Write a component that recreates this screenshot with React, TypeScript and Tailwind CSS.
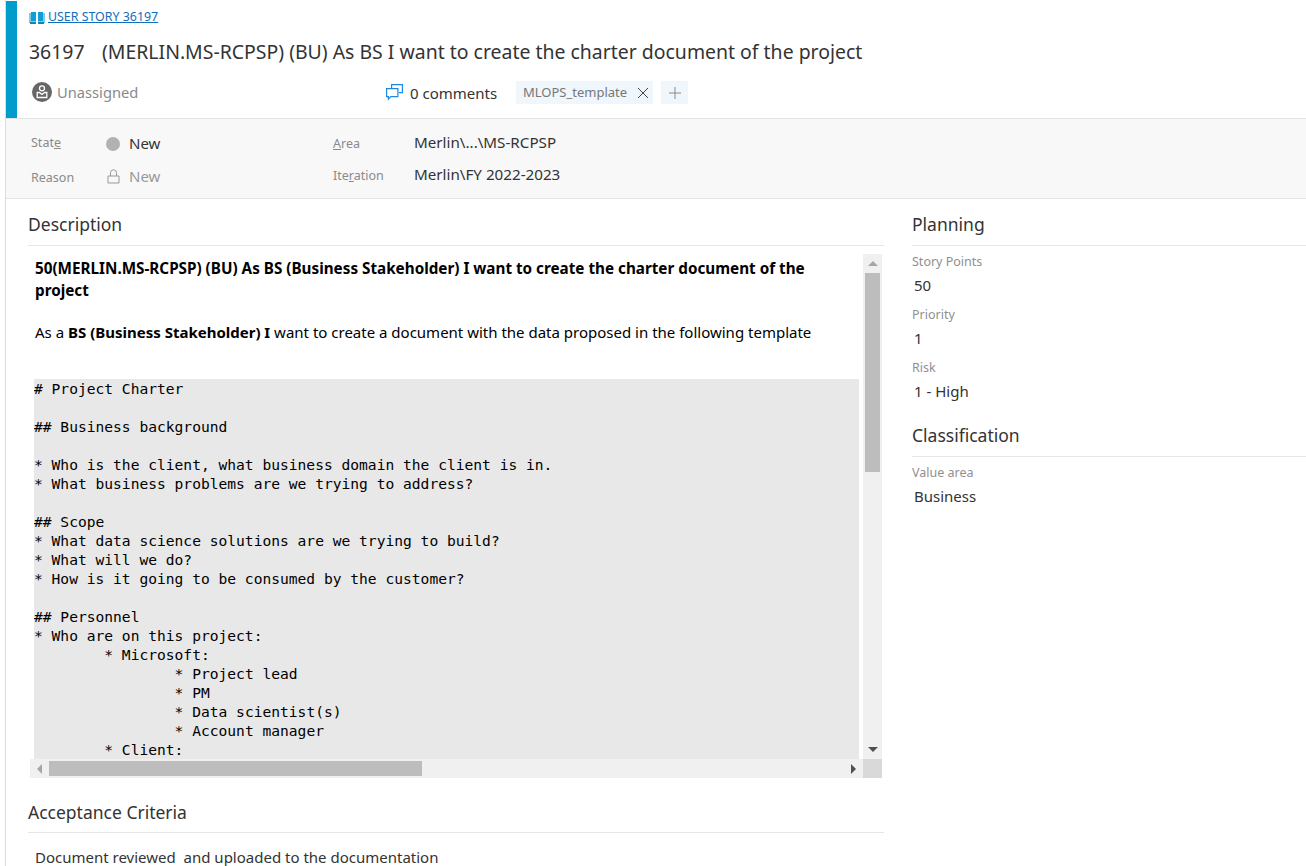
import React from 'react';

const ui = { fontFamily: '"Noto Sans", "Open Sans", sans-serif' };

const codeText = `# Project Charter

## Business background

* Who is the client, what business domain the client is in.
* What business problems are we trying to address?

## Scope
* What data science solutions are we trying to build?
* What will we do?
* How is it going to be consumed by the customer?

## Personnel
* Who are on this project:
\t* Microsoft:
\t\t* Project lead
\t\t* PM
\t\t* Data scientist(s)
\t\t* Account manager
\t* Client:`;

function BookIcon() {
  return (
    <svg width="16" height="12" viewBox="0 0 16 12" className="shrink-0">
      <path d="M0 1h16v10H0z" fill="#7fcbe6" />
      <path d="M2 0h5v9H2zM9 0h5v9H9z" fill="#0f9ed5" />
      <path d="M7 0h2v11H7z" fill="#ffffff" />
      <path d="M1 10h6v2H1zM9 10h6v2H9z" fill="#0f86b8" />
    </svg>
  );
}

function AvatarIcon() {
  return (
    <svg width="20" height="20" viewBox="0 0 20 20" className="shrink-0">
      <circle cx="10" cy="10" r="10" fill="#666666" />
      <circle cx="10" cy="6.3" r="2.5" fill="none" stroke="#ffffff" strokeWidth="1.3" />
      <path d="M5.2 10.5h2.2l2.6 2 2.6-2h2.2v5H5.2z" fill="none" stroke="#ffffff" strokeWidth="1.3" />
    </svg>
  );
}

function CommentIcon() {
  return (
    <svg width="17" height="17" viewBox="0 0 17 17" className="shrink-0" fill="none" stroke="#1e88e5" strokeWidth="1.2">
      <path d="M5.6 4.5V.6h10.8v8h-3.5" />
      <path d="M.6 4.6h11.3v8H4.8l-2.4 2.6v-2.6H.6z" fill="#ffffff" />
    </svg>
  );
}

function LockIcon() {
  return (
    <svg width="13" height="15" viewBox="0 0 13 15" fill="none" stroke="#999999" strokeWidth="1">
      <path d="M1 7h11v7H1z" />
      <path d="M3.5 7V3.8a3 3 0 0 1 6 0V7" />
    </svg>
  );
}

function Field({ label, value }: { label: string; value: string }) {
  return (
    <div className="h-[53px]">
      <div className="pt-[1px] text-[12.5px] leading-[16px] text-[#8f8f8f]">{label}</div>
      <div className="pl-[2px] pt-[5px] text-[15px] leading-[20px] text-[#333333]">{value}</div>
    </div>
  );
}

export default function App() {
  return (
    <div className="h-[866px] w-[1306px] overflow-hidden bg-white" style={ui}>
      <div className="ml-[5px] h-full border-l border-[#dcdcdc]">
        {/* Header */}
        <div className="flex h-[119px] border-b border-[#e4e4e4] pt-[1px]">
          <div className="w-[11px] shrink-0 bg-[#009ccc]" />
          <div className="flex-1 pl-[12px]">
            <div className="flex h-[30px] items-center gap-[3px] pt-[3px]">
              <BookIcon />
              <a className="text-[12.4px] text-[#106ebe] underline">USER STORY 36197</a>
            </div>
            <div className="flex h-[41px] items-center text-[19.45px] text-[#333333]">
              <span className="w-[73px]">36197</span>
              <span className="whitespace-nowrap">(MERLIN.MS-RCPSP) (BU) As BS I want to create the charter document of the project</span>
            </div>
            <div className="flex h-[41px] items-center pl-[3px]">
              <div className="flex w-[354px] items-center gap-[5px]">
                <AvatarIcon />
                <span className="text-[14.7px] text-[#8a8a8a]">Unassigned</span>
              </div>
              <CommentIcon />
              <span className="ml-[7px] w-[106px] pt-[2px] text-[15px] text-[#333333]">0 comments</span>
              <div className="flex h-[23px] w-[137px] items-center justify-between bg-[#eff6fc] pl-[7px] pr-[4px]">
                <span className="text-[13px] text-[#777777]">MLOPS_template</span>
                <svg width="12" height="12" viewBox="0 0 12 12" stroke="#444444" strokeWidth="1">
                  <path d="M1 1l10 10M11 1L1 11" />
                </svg>
              </div>
              <div className="ml-[8px] flex h-[23px] w-[27px] items-center justify-center bg-[#eff6fc]">
                <svg width="14" height="14" viewBox="0 0 14 14" stroke="#8a8a8a" strokeWidth="1">
                  <path d="M7 1v12M1 7h12" />
                </svg>
              </div>
            </div>
          </div>
        </div>

        {/* State bar */}
        <div className="flex h-[80px] border-b border-[#e4e4e4] bg-[#f8f8f8] pl-[25px] pt-[8px]">
          <div className="w-[302px]">
            <div className="flex h-[33px] items-center">
              <span className="w-[75px] text-[12.5px] text-[#8a8a8a]">Stat<span className="underline">e</span></span>
              <span className="h-[14px] w-[14px] rounded-full bg-[#b2b2b2]" />
              <span className="ml-[9px] text-[15px] text-[#333333]">New</span>
            </div>
            <div className="flex h-[33px] items-center">
              <span className="w-[76px] pt-[3px] text-[12.5px] text-[#8a8a8a]">Reason</span>
              <LockIcon />
              <span className="ml-[9px] text-[15px] text-[#999999]">New</span>
            </div>
          </div>
          <div>
            <div className="flex h-[33px] items-center">
              <span className="w-[81px] pt-[2px] text-[12.5px] text-[#8a8a8a]"><span className="underline">A</span>rea</span>
              <span className="pb-[2px] text-[15.2px] text-[#333333]">Merlin\...\MS-RCPSP</span>
            </div>
            <div className="flex h-[33px] items-center">
              <span className="w-[81px] text-[12.5px] text-[#8a8a8a]">Ite<span className="underline">r</span>ation</span>
              <span className="pb-[4px] text-[15.2px] text-[#333333]">Merlin\FY 2022-2023</span>
            </div>
          </div>
        </div>

        {/* Body */}
        <div className="flex pl-[22px]">
          <div className="w-[856px] shrink-0">
            <div className="h-[47px] border-b border-[#e6e6e6] pt-[13px] text-[17.5px] leading-[24px] text-[#333333]">Description</div>

            <div className="ml-[2px] mt-[8px] w-[852px]">
              <div className="flex h-[505px]">
                <div className="w-[829px] shrink-0 overflow-hidden pl-[4px]">
                  <div className="pl-[1px] pr-[20px] text-[15px] text-black">
                    <p className="pt-[3px] text-[15.25px] font-bold leading-[22px]">50(MERLIN.MS-RCPSP) (BU) As BS (Business Stakeholder) I want to create the charter document of the project</p>
                    <p className="mt-[20px] whitespace-nowrap leading-[22px]">As a <b>BS (Business Stakeholder) I</b> want to create a document with the data proposed in the following template</p>
                  </div>
                  <pre className="mt-[36px] h-[380px] overflow-hidden whitespace-pre bg-[#e8e8e8] text-[14.6px] leading-[19px] text-black" style={{ fontFamily: '"DejaVu Sans Mono", monospace', tabSize: 8 }}>{codeText}</pre>
                </div>
                <div className="ml-[4px] flex w-[19px] flex-col items-center bg-[#f0f0f0]">
                  <div className="flex h-[19px] items-center justify-center">
                    <div className="h-0 w-0 border-x-[5px] border-b-[5px] border-x-transparent border-b-[#a6a6a6]" />
                  </div>
                  <div className="h-[199px] w-[15px] bg-[#bdbdbd]" />
                  <div className="flex-1" />
                  <div className="flex h-[19px] items-center justify-center">
                    <div className="h-0 w-0 border-x-[5px] border-t-[5px] border-x-transparent border-t-[#505050]" />
                  </div>
                </div>
              </div>
              <div className="flex h-[19px]">
                <div className="flex w-[833px] items-center bg-[#f0f0f0]">
                  <div className="flex w-[19px] justify-center">
                    <div className="h-0 w-0 border-y-[5px] border-r-[5px] border-y-transparent border-r-[#a6a6a6]" />
                  </div>
                  <div className="h-[15px] w-[373px] bg-[#bdbdbd]" />
                  <div className="flex-1" />
                  <div className="flex w-[19px] justify-center">
                    <div className="h-0 w-0 border-y-[5px] border-l-[5px] border-y-transparent border-l-[#505050]" />
                  </div>
                </div>
                <div className="w-[19px] bg-[#d9d9d9]" />
              </div>
            </div>

            <div className="mt-[20px] h-[35px] border-b border-[#e6e6e6] pt-[2px] text-[17.5px] leading-[24px] text-[#333333]">Acceptance Criteria</div>
            <div className="whitespace-pre pl-[7px] pt-[12px] text-[15px] leading-[24px] text-[#333333]">Document reviewed  and uploaded to the documentation</div>
          </div>

          <div className="ml-[28px] flex-1">
            <div className="h-[47px] border-b border-[#e6e6e6] pt-[13px] text-[17.5px] leading-[24px] text-[#333333]">Planning</div>
            <div className="pt-[7px]">
              <Field label="Story Points" value="50" />
              <Field label="Priority" value="1" />
              <Field label="Risk" value="1 - High" />
            </div>
            <div className="h-[45px] border-b border-[#e6e6e6] pt-[11px] text-[17.5px] leading-[24px] text-[#333333]">Classification</div>
            <div className="pt-[7px]">
              <Field label="Value area" value="Business" />
            </div>
          </div>
        </div>
      </div>
    </div>
  );
}
